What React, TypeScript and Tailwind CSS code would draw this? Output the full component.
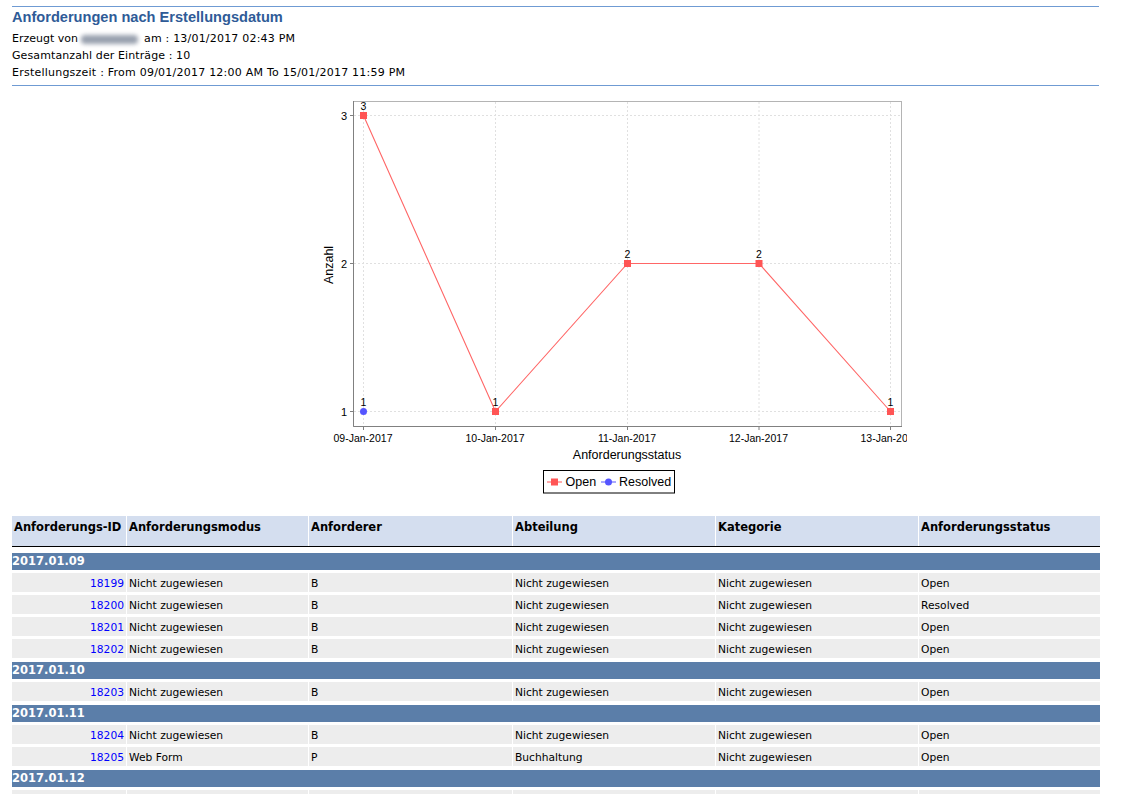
const columns = "grid grid-cols-[114px_181px_203px_202px_202px_181px] gap-x-px";
const verdana = "font-['DejaVu_Sans','Liberation_Sans',sans-serif]";

const headers = ["Anforderungs-ID", "Anforderungsmodus", "Anforderer", "Abteilung", "Kategorie", "Anforderungsstatus"];

type Row = { id: string; modus: string; by: string; dept: string; cat: string; status: string };

const nz = "Nicht zugewiesen";
const groups: { date: string; rows: Row[] }[] = [
  {
    date: "2017.01.09",
    rows: [
      { id: "18199", modus: nz, by: "B", dept: nz, cat: nz, status: "Open" },
      { id: "18200", modus: nz, by: "B", dept: nz, cat: nz, status: "Resolved" },
      { id: "18201", modus: nz, by: "B", dept: nz, cat: nz, status: "Open" },
      { id: "18202", modus: nz, by: "B", dept: nz, cat: nz, status: "Open" },
    ],
  },
  { date: "2017.01.10", rows: [{ id: "18203", modus: nz, by: "B", dept: nz, cat: nz, status: "Open" }] },
  {
    date: "2017.01.11",
    rows: [
      { id: "18204", modus: nz, by: "B", dept: nz, cat: nz, status: "Open" },
      { id: "18205", modus: "Web Form", by: "P", dept: "Buchhaltung", cat: nz, status: "Open" },
    ],
  },
  // the page is cut off just below the top of this row, no text shows
  { date: "2017.01.12", rows: [{ id: "", modus: "", by: "", dept: "", cat: "", status: "" }] },
];

const xs = [363.5, 495.5, 627.5, 759, 890.5];
const ys = [115.5, 263.5, 411.5];
const openPoints: [number, number, string][] = [
  [xs[0], ys[0], "3"],
  [xs[1], ys[2], "1"],
  [xs[2], ys[1], "2"],
  [xs[3], ys[1], "2"],
  [xs[4], ys[2], "1"],
];
const dates = ["09-Jan-2017", "10-Jan-2017", "11-Jan-2017", "12-Jan-2017", "13-Jan-2017"];

const Chart = () => (
  <svg viewBox="307 98 600 400" className="block w-[600px] h-[400px] ml-[295px]" fontFamily="'Liberation Sans', Arial, sans-serif">
    <rect x="353.5" y="101.5" width="548" height="325" fill="#fff" stroke="#b4b4b4" />
    {xs.map((x) => (
      <line key={x} x1={x} x2={x} y1="102" y2="426" stroke="#e0e0e0" strokeDasharray="2 2" />
    ))}
    {ys.map((y) => (
      <line key={y} x1="354" x2="901" y1={y} y2={y} stroke="#e0e0e0" strokeDasharray="2 2" />
    ))}
    <path d="M353.5 101V426.5H902" fill="none" stroke="#808080" />
    {ys.map((y) => (
      <line key={y} x1="350" x2="353" y1={y} y2={y} stroke="#808080" />
    ))}
    {xs.map((x) => (
      <line key={x} x1={x} x2={x} y1="427" y2="430" stroke="#808080" />
    ))}
    {["3", "2", "1"].map((t, i) => (
      <text key={t} x="344" y={ys[i] + 4} fontSize="11" textAnchor="middle" fill="#000">
        {t}
      </text>
    ))}
    {dates.map((d, i) => (
      <text key={d} x={xs[i] - 0.5} y="442" fontSize="10.5" textAnchor="middle" fill="#000">
        {d}
      </text>
    ))}
    <text x="627" y="459" fontSize="12.5" textAnchor="middle" fill="#000">
      Anforderungsstatus
    </text>
    <text transform="translate(333 265) rotate(-90)" fontSize="12.5" textAnchor="middle" fill="#000">
      Anzahl
    </text>

    <polyline points={openPoints.map((p) => `${p[0]},${p[1]}`).join(" ")} fill="none" stroke="#ff6666" strokeWidth="1.1" />
    {openPoints.map(([x, y, label]) => (
      <g key={x}>
        <rect x={x - 3.5} y={y - 3.5} width="7" height="7" fill="#ff5555" />
        <text x={x} y={y - 6} fontSize="10.5" textAnchor="middle" fill="#000">
          {label}
        </text>
      </g>
    ))}
    <circle cx={xs[0]} cy={ys[2]} r="3.5" fill="#5555ff" />
    <text x={xs[0]} y={ys[2] - 6} fontSize="10.5" textAnchor="middle" fill="#000">
      1
    </text>

    <rect x="543.5" y="470.5" width="131" height="22.5" fill="#fff" stroke="#000" />
    <line x1="547" x2="562" y1="482" y2="482" stroke="#ff5555" />
    <rect x="551" y="478.5" width="7" height="7" fill="#ff5555" />
    <text x="565.5" y="486" fontSize="12.5" fill="#000">
      Open
    </text>
    <line x1="601" x2="616" y1="482" y2="482" stroke="#5555ff" />
    <circle cx="608.5" cy="482" r="3.5" fill="#5555ff" />
    <text x="619" y="486" fontSize="12.5" fill="#000">
      Resolved
    </text>
  </svg>
);

export default function App() {
  return (
    <div className={`h-[794px] overflow-hidden bg-white pt-[6px] pl-3 text-[11px] text-black ${verdana}`}>
      <div className="w-[1087px] border-t border-[#6f9bd3]">
        <h1 className="mt-[1px] flex h-[20px] items-center font-['Liberation_Sans',sans-serif] text-[14.6px] font-bold text-[#2f5b97]">
          Anforderungen nach Erstellungsdatum
        </h1>
        <div className="mt-[3px] flex h-[17px] items-center">
          Erzeugt von
          <span className="ml-[3px] mr-[6px] h-[9px] w-[57px] rounded-sm bg-gray-400 blur-[2px]" />
          <span className="tracking-[0.2px]">am : 13/01/2017 02:43 PM</span>
        </div>
        <div className="flex h-[17px] items-center tracking-[0.1px]">Gesamtanzahl der Einträge : 10</div>
        <div className="flex h-[17px] items-center tracking-[0.23px]">Erstellungszeit : From 09/01/2017 12:00 AM To 15/01/2017 11:59 PM</div>
        <div className="mt-[3px] border-t border-[#6f9bd3]" />
      </div>

      <div className="mt-[12px]">
        <Chart />
      </div>

      <div className="mt-[18px] w-[1088px]">
        <div className={`${columns} h-[31px] border-b border-black`}>
          {headers.map((h) => (
            <div key={h} className="bg-[#d4deef] px-[2px] pt-[3px] text-[11.5px] font-bold">
              {h}
            </div>
          ))}
        </div>
        <div className="mt-[6px] flex flex-col gap-1">
          {groups.map((g) => (
            <div key={g.date} className="flex flex-col gap-[3px]">
              <div className="flex h-[17px] items-center bg-[#5b7ea9] pt-[1px] text-[11.5px] font-bold text-white">{g.date}</div>
              {g.rows.map((r) => (
                <div key={r.id} className={`${columns} h-[19px] text-[10.7px]`}>
                  <div className="flex items-center justify-end bg-[#ededed] px-[2px] pt-[3px]">
                    <a href="#" className="text-[#0000ff]">
                      {r.id}
                    </a>
                  </div>
                  {[r.modus, r.by, r.dept, r.cat, r.status].map((c, i) => (
                    <div key={i} className="flex items-center bg-[#ededed] px-[2px] pt-[3px]">
                      {c}
                    </div>
                  ))}
                </div>
              ))}
            </div>
          ))}
        </div>
      </div>
    </div>
  );
}
